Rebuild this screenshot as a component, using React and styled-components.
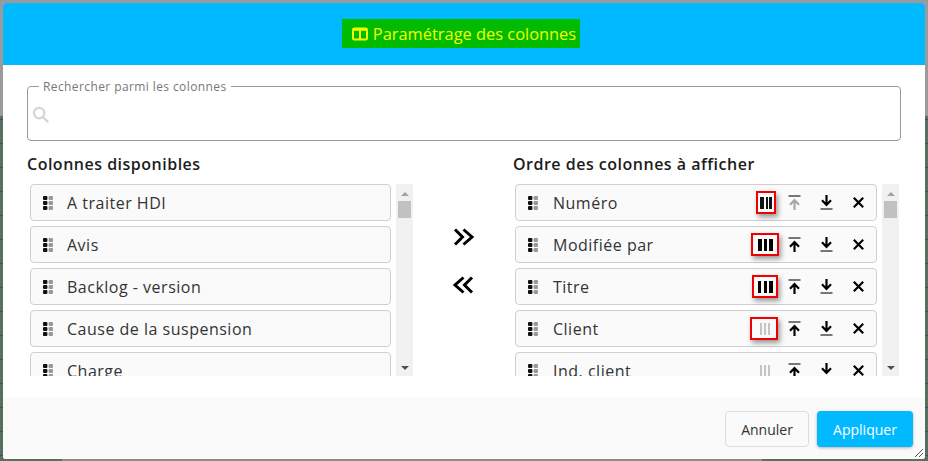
import React from "react";
import styled, { createGlobalStyle } from "styled-components";

const GlobalStyle = createGlobalStyle`
  html, body { margin: 0; padding: 0; }
  body { font-family: "Open Sans", "Noto Sans", sans-serif; }
`;

const Backdrop = styled.div`
  width: 928px;
  height: 461px;
  box-sizing: border-box;
  padding: 3px 3px 2px 3px;
  overflow: hidden;
  background:
    linear-gradient(90deg, transparent 62px, #8a8a8a 62px, #8a8a8a 762px, transparent 762px) bottom / 100% 2px no-repeat,
    linear-gradient(#9a9a9a 116px, transparent 116px),
    repeating-linear-gradient(#56705f 0, #56705f 23px, #3e5547 23px, #3e5547 24px);
`;

const Modal = styled.div`
  position: relative;
  width: 922px;
  height: 456px;
  display: flex;
  flex-direction: column;
  background: #fff;
  border-radius: 3px;
  overflow: hidden;
`;

const Header = styled.div`
  height: 62px;
  flex: none;
  display: flex;
  justify-content: center;
  align-items: flex-start;
  padding: 16px 6px 0 0;
  box-sizing: border-box;
  background: #00b9ff;
`;

const Title = styled.h2`
  margin: 0;
  height: 29px;
  padding: 0 4px 0 10px;
  display: flex;
  align-items: center;
  gap: 5px;
  background: #00bb00;
  color: #f2ff00;
  font-size: 16.4px;
  font-weight: 500;
  white-space: nowrap;
`;

const Body = styled.div`
  flex: 1;
  min-height: 0;
  padding: 15px 24px 0 24px;
  display: flex;
  flex-direction: column;
`;

const SearchBox = styled.fieldset`
  margin: 0;
  padding: 0 0 0 4px;
  height: 61px;
  box-sizing: border-box;
  border: 1px solid #9b9b9b;
  border-radius: 4px;
  flex: none;
`;

const SearchLegend = styled.legend`
  margin-left: 7px;
  padding: 0 4px;
  font-size: 12px;
  line-height: 13px;
  color: #777;
  letter-spacing: 0.4px;
`;

const SearchRow = styled.div`
  height: 42px;
  display: flex;
  align-items: center;
  gap: 6px;
`;

const SearchInput = styled.input`
  flex: 1;
  min-width: 0;
  border: none;
  outline: none;
  background: none;
  font-family: inherit;
  font-size: 14px;
`;

const Columns = styled.div`
  display: grid;
  grid-template-columns: 386px 100px 388px;
  margin-top: 12px;
`;

const Pane = styled.div`
  min-width: 0;
`;

const PaneTitle = styled.h3`
  margin: 0 0 9px 0;
  height: 22px;
  line-height: 22px;
  font-size: 16px;
  font-weight: 600;
  letter-spacing: 0.5px;
  color: #1c1c1c;
  white-space: nowrap;
`;

const ListFrame = styled.div`
  height: 192px;
  display: grid;
  grid-template-columns: ${(p) => (p.$right ? "362px 17px" : "361px 17px")};
  column-gap: 5px;
  padding-left: ${(p) => (p.$right ? "2px" : "3px")};
  overflow: hidden;
`;

const List = styled.div`
  display: flex;
  flex-direction: column;
  gap: 5px;
  height: 192px;
  overflow: hidden;
`;

const Row = styled.div`
  flex: none;
  height: 37px;
  box-sizing: border-box;
  display: flex;
  align-items: center;
  padding-left: 12px;
  padding-right: 2px;
  background: #fafafa;
  border: 1px solid #cfcfcf;
  border-radius: 4px;
`;

const RowLabel = styled.span`
  margin-left: ${(p) => (p.$right ? "15px" : "14px")};
  font-size: 16px;
  letter-spacing: 0.5px;
  color: #333;
  flex: 1;
  white-space: nowrap;
`;

const Actions = styled.div`
  display: flex;
  align-items: center;
`;

const ColumnsCell = styled.div`
  width: ${(p) => p.$width}px;
  margin-right: ${(p) => p.$gap}px;
  height: 23px;
  box-sizing: border-box;
  display: flex;
  align-items: center;
  justify-content: center;
  border: ${(p) => (p.$marked ? "2px solid #f00000" : "2px solid transparent")};
  box-shadow: ${(p) => (p.$marked ? "2px 3px 5px rgba(0,0,0,.4)" : "none")};
`;

const ActionCell = styled.div`
  width: 32px;
  display: flex;
  justify-content: center;
  align-items: center;
  color: ${(p) => (p.$off ? "#a8a8a8" : "#000")};
`;

const Scrollbar = styled.div`
  height: 192px;
  display: flex;
  flex-direction: column;
  align-items: center;
  background: #f1f1f1;
  padding: 8px 2px 6px;
  box-sizing: border-box;
`;

const ScrollUp = styled.div`
  width: 0;
  height: 0;
  border-left: 4px solid transparent;
  border-right: 4px solid transparent;
  border-bottom: 4px solid #a3a3a3;
`;

const ScrollThumb = styled.div`
  width: 100%;
  height: 17px;
  margin-top: 5px;
  background: #c1c1c1;
  margin-bottom: auto;
`;

const ScrollDown = styled.div`
  width: 0;
  height: 0;
  border-left: 4px solid transparent;
  border-right: 4px solid transparent;
  border-top: 4px solid #505050;
`;

const TransferColumn = styled.div`
  display: flex;
  flex-direction: column;
  align-items: center;
  gap: 28px;
  padding-top: 74px;
`;

const TransferButton = styled.button`
  border: none;
  background: none;
  padding: 0;
  width: 24px;
  height: 20px;
  display: flex;
  justify-content: center;
  color: #000;
`;

const Footer = styled.div`
  height: 61px;
  flex: none;
  box-sizing: border-box;
  background: #fafafa;
  padding: 13px 12px 0 0;
  display: flex;
  justify-content: flex-end;
  align-items: flex-start;
  gap: 8px;
`;

const CancelButton = styled.button`
  width: 84px;
  height: 36px;
  font-family: inherit;
  font-size: 14px;
  color: #333;
  background: #fafafa;
  border: 1px solid #dcdcdc;
  border-radius: 4px;
`;

const ApplyButton = styled.button`
  width: 96px;
  height: 36px;
  font-family: inherit;
  font-size: 14px;
  font-weight: 500;
  color: #fff;
  background: #00b9ff;
  border: none;
  border-radius: 4px;
  box-shadow: 0 1px 3px rgba(0, 0, 0, 0.3);
`;

const ResizeGrip = styled.svg`
  position: absolute;
  right: 1px;
  bottom: 1px;
`;

const SearchIcon = () => (
  <svg width="17" height="17" viewBox="0 0 18 18" fill="none" stroke="#d6d6d6" strokeWidth="2.4">
    <circle cx="7.5" cy="7.5" r="5.5" />
    <path d="M11.5 11.5 L16.5 16.5" strokeLinecap="round" />
  </svg>
);

const GripIcon = () => (
  <svg width="10" height="14" viewBox="0 0 10 14">
    {[0, 5, 10].map((y) => (
      <g key={y}>
        <rect x="0" y={y} width="4.4" height="4" rx="1" fill="#111" />
        <rect x="5.6" y={y} width="4.4" height="4" rx="1" fill="#999" />
      </g>
    ))}
  </svg>
);

const BarsIcon = ({ bars, color }) => (
  <svg width="16" height="12" viewBox="0 0 16 12">
    {bars.map(([x, w]) => (
      <rect key={x} x={x} y="0" width={w} height="12" fill={color} />
    ))}
  </svg>
);

const TitleIcon = () => (
  <svg width="16" height="14" viewBox="0 0 16 14" fill="none" stroke="#f2ff00" strokeWidth="2">
    <rect x="1" y="1.5" width="14" height="11" rx="1.5" />
    <path d="M8 2 V12" />
    <path d="M1 2.5 H15" strokeWidth="2.5" />
  </svg>
);

const ToTopIcon = () => (
  <svg width="13" height="15" viewBox="0 0 13 15" fill="none" stroke="currentColor">
    <path d="M0.5 1 H12.5" strokeWidth="2" stroke="#777" />
    <path d="M6.5 15 V5.5 M2 9.8 L6.5 5 L11 9.8" strokeWidth="2.2" />
  </svg>
);

const ToBottomIcon = () => (
  <svg width="13" height="15" viewBox="0 0 13 15" fill="none" stroke="currentColor">
    <path d="M6.5 0 V9.5 M2 5.2 L6.5 10 L11 5.2" strokeWidth="2.2" />
    <path d="M0.5 14 H12.5" strokeWidth="2" stroke="#777" />
  </svg>
);

const CloseIcon = () => (
  <svg width="11" height="11" viewBox="0 0 11 11" fill="none" stroke="currentColor" strokeWidth="2.2">
    <path d="M0.8 0.8 L10.2 10.2 M10.2 0.8 L0.8 10.2" />
  </svg>
);

const DoubleRight = () => (
  <svg width="22" height="20" viewBox="0 0 22 20" fill="none" stroke="currentColor" strokeWidth="3">
    <path d="M3 2.5 L10.5 10 L3 17.5 M11.5 2.5 L20 10 L11.5 17.5" />
  </svg>
);

const DoubleLeft = () => (
  <svg width="22" height="20" viewBox="0 0 22 20" fill="none" stroke="currentColor" strokeWidth="3">
    <path d="M20 2.5 L12.5 10 L20 17.5 M11.5 2.5 L3 10 L11.5 17.5" />
  </svg>
);

const available = ["A traiter HDI", "Avis", "Backlog - version", "Cause de la suspension", "Charge"];

const selected = [
  { label: "Numéro", bars: [[2, 4], [8, 2], [11, 3]], color: "#111", marked: true, width: 20, gap: 2 },
  { label: "Modifiée par", bars: [[1, 4], [7, 3], [12, 4]], color: "#000", marked: true, width: 28, gap: -1 },
  { label: "Titre", bars: [[1, 3], [7, 3], [12, 4]], color: "#000", marked: true, width: 26, gap: 0 },
  { label: "Client", bars: [[4, 2], [8, 2], [12, 2]], color: "#c4c4c4", marked: true, width: 28, gap: 0 },
  { label: "Ind. client", bars: [[4, 2], [8, 2], [12, 2]], color: "#c4c4c4", width: 28, gap: 0 },
];

export default function App() {
  return (
    <>
      <GlobalStyle />
      <Backdrop>
        <Modal>
          <Header>
            <Title>
              <TitleIcon />
              Paramétrage des colonnes
            </Title>
          </Header>
          <Body>
            <SearchBox>
              <SearchLegend>Rechercher parmi les colonnes</SearchLegend>
              <SearchRow>
                <SearchIcon />
                <SearchInput />
              </SearchRow>
            </SearchBox>
            <Columns>
              <Pane>
                <PaneTitle>Colonnes disponibles</PaneTitle>
                <ListFrame>
                  <List>
                    {available.map((label) => (
                      <Row key={label}>
                        <GripIcon />
                        <RowLabel>{label}</RowLabel>
                      </Row>
                    ))}
                  </List>
                  <Scrollbar>
                    <ScrollUp />
                    <ScrollThumb />
                    <ScrollDown />
                  </Scrollbar>
                </ListFrame>
              </Pane>
              <TransferColumn>
                <TransferButton>
                  <DoubleRight />
                </TransferButton>
                <TransferButton>
                  <DoubleLeft />
                </TransferButton>
              </TransferColumn>
              <Pane>
                <PaneTitle>Ordre des colonnes à afficher</PaneTitle>
                <ListFrame $right>
                  <List>
                    {selected.map((col, i) => (
                      <Row key={col.label}>
                        <GripIcon />
                        <RowLabel $right>{col.label}</RowLabel>
                        <Actions>
                          <ColumnsCell $marked={col.marked} $width={col.width} $gap={col.gap}>
                            <BarsIcon bars={col.bars} color={col.color} />
                          </ColumnsCell>
                          <ActionCell $off={i === 0}>
                            <ToTopIcon />
                          </ActionCell>
                          <ActionCell>
                            <ToBottomIcon />
                          </ActionCell>
                          <ActionCell>
                            <CloseIcon />
                          </ActionCell>
                        </Actions>
                      </Row>
                    ))}
                  </List>
                  <Scrollbar>
                    <ScrollUp />
                    <ScrollThumb />
                    <ScrollDown />
                  </Scrollbar>
                </ListFrame>
              </Pane>
            </Columns>
          </Body>
          <Footer>
            <CancelButton>Annuler</CancelButton>
            <ApplyButton>Appliquer</ApplyButton>
          </Footer>
          <ResizeGrip width="10" height="10" viewBox="0 0 10 10" stroke="#555" strokeWidth="1">
            <path d="M1 9 L9 1 M5 9 L9 5" />
          </ResizeGrip>
        </Modal>
      </Backdrop>
    </>
  );
}
